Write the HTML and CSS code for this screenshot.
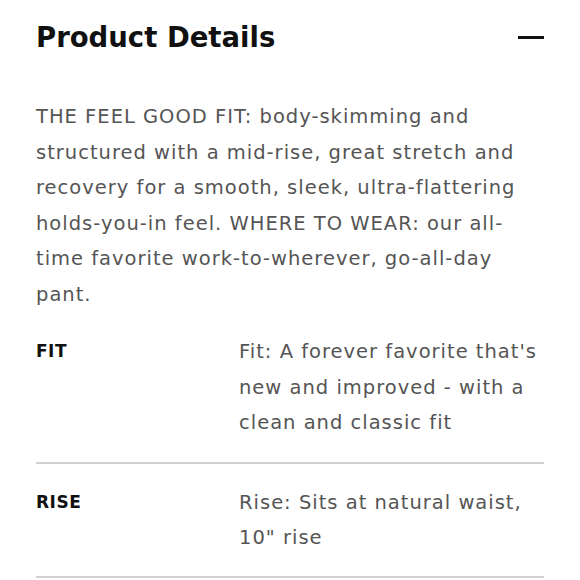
FILE: index.html
```html
<!DOCTYPE html>
<html>
<head>
<meta charset="utf-8">
<link rel="stylesheet" href="styles.css">
</head>
<body>
<section class="details">
  <header class="head">
    <h2 class="title">Product Details</h2>
    <span class="minus"></span>
  </header>
  <p class="desc">THE FEEL GOOD FIT: body-skimming and structured with a mid-rise, great stretch and recovery for a smooth, sleek, ultra-flattering holds-you-in feel. WHERE TO WEAR: our all-time favorite work-to-wherever, go-all-day pant.</p>
  <div class="row">
    <div class="label">FIT</div>
    <div class="value">Fit: A forever favorite that's new and improved - with a clean and classic fit</div>
  </div>
  <div class="row">
    <div class="label">RISE</div>
    <div class="value">Rise: Sits at natural waist, 10" rise</div>
  </div>
</section>
</body>
</html>
```

FILE: styles.css
```css
html, body {
  margin: 0;
  padding: 0;
  background: #fff;
}
.details {
  padding: 0 36px;
  font-family: "DejaVu Sans", sans-serif;
  color: #555;
}
.head {
  display: flex;
  align-items: center;
  justify-content: space-between;
  padding-top: 17px;
  height: 40px;
}
.title {
  margin: 0;
  font-size: 27.5px;
  font-weight: 700;
  color: #111;
  letter-spacing: 0;
}
.minus {
  width: 26px;
  height: 3px;
  background: #111;
}
.desc {
  margin: 42px 0 0;
  font-size: 19.5px;
  line-height: 35.5px;
  letter-spacing: 1px;
}
.row {
  display: grid;
  grid-template-columns: 203px 1fr;
  padding: 22px 0 21px;
  border-bottom: 2px solid #d0d0d0;
}
.row + .row {
  padding-top: 21px;
  padding-bottom: 20px;
}
.label {
  font-size: 17px;
  font-weight: 700;
  color: #111;
  line-height: 35.5px;
  letter-spacing: 0.5px;
}
.value {
  font-size: 19.5px;
  line-height: 35.5px;
  letter-spacing: 1px;
}
```
